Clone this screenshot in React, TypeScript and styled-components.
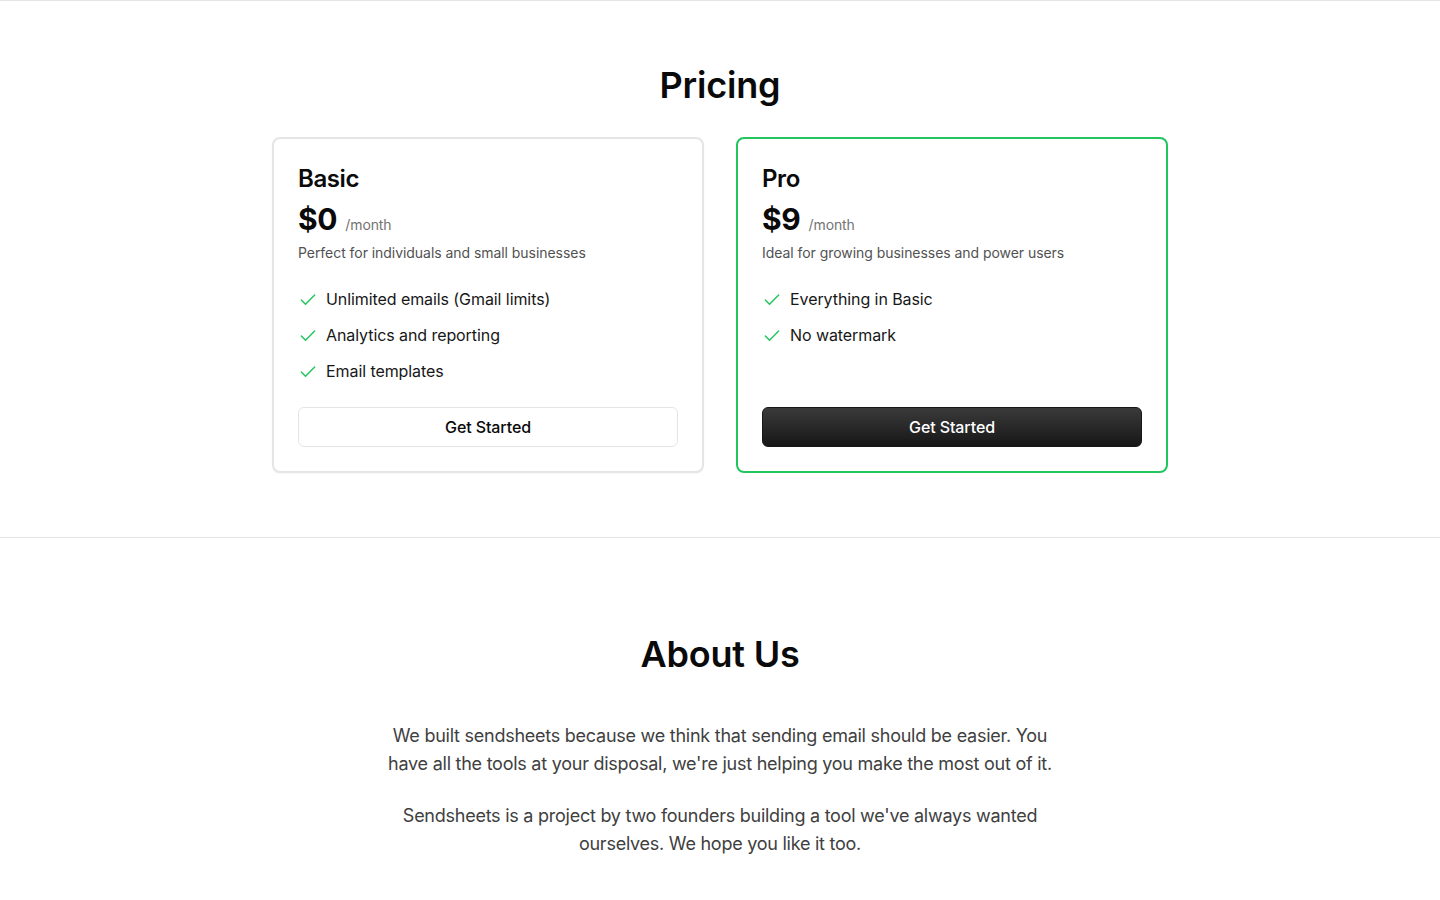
import React from "react";
import styled, { createGlobalStyle } from "styled-components";
import { Check } from "lucide-react";

const Global = createGlobalStyle`
  * { box-sizing: border-box; }
  html, body { margin: 0; padding: 0; background: #ffffff; }
  body {
    font-family: Inter, "Noto Sans", "Liberation Sans", sans-serif;
    color: #0a0a0a;
    -webkit-font-smoothing: antialiased;
  }
  h1, h2, h3, p, ul { margin: 0; padding: 0; }
`;

const Page = styled.main`
  display: flex;
  flex-direction: column;
`;

const PricingSection = styled.section`
  border-top: 1px solid #e5e5e5;
  border-bottom: 1px solid #e5e5e5;
  padding: 64px 16px 64px;
  display: flex;
  flex-direction: column;
  align-items: center;
`;

const SectionTitle = styled.h2`
  font-size: 36px;
  line-height: 40px;
  font-weight: 600;
  letter-spacing: -0.2px;
  text-align: center;
  color: #0a0a0a;
`;

const CardGrid = styled.div`
  margin-top: 32px;
  width: 100%;
  max-width: 896px;
  display: grid;
  grid-template-columns: 1fr 1fr;
  gap: 32px;
`;

const Card = styled.div<{ $highlight?: boolean }>`
  display: flex;
  flex-direction: column;
  padding: 24px;
  border-radius: 8px;
  border: 2px solid ${(p) => (p.$highlight ? "#22c55e" : "#e5e5e5")};
  background: #ffffff;
  box-shadow: ${(p) => (p.$highlight ? "none" : "0 1px 2px rgba(0,0,0,0.04)")};
`;

const PlanName = styled.h3`
  font-size: 24px;
  line-height: 32px;
  font-weight: 600;
  letter-spacing: -0.4px;
`;

const PriceRow = styled.div`
  margin-top: 6px;
  display: flex;
  align-items: baseline;
  gap: 8px;
`;

const Price = styled.span`
  font-size: 30px;
  line-height: 36px;
  font-weight: 700;
  letter-spacing: -0.3px;
`;

const Period = styled.span`
  font-size: 14px;
  line-height: 20px;
  color: #737373;
  letter-spacing: -0.1px;
`;

const Description = styled.p`
  margin-top: 6px;
  font-size: 14px;
  line-height: 20px;
  color: #525252;
  letter-spacing: -0.05px;
`;

const FeatureList = styled.ul`
  list-style: none;
  margin-top: 24px;
  display: flex;
  flex-direction: column;
  gap: 12px;
`;

const Feature = styled.li`
  display: flex;
  align-items: center;
  gap: 8px;
  font-size: 16px;
  line-height: 24px;
  color: #171717;
  letter-spacing: -0.08px;

  svg {
    flex-shrink: 0;
    color: #22c55e;
    margin-top: 2px;
  }
`;

const Button = styled.button<{ $primary?: boolean }>`
  height: 40px;
  width: 100%;
  border-radius: 6px;
  font-family: inherit;
  font-size: 16px;
  font-weight: 500;
  letter-spacing: -0.1px;
  cursor: pointer;
  border: 1px solid ${(p) => (p.$primary ? "#171717" : "#e5e5e5")};
  background: ${(p) =>
    p.$primary ? "linear-gradient(180deg, #3a3a3a 0%, #171717 100%)" : "#ffffff"};
  color: ${(p) => (p.$primary ? "#ffffff" : "#0a0a0a")};
`;

const ButtonSpacer = styled.div`
  flex: 1;
  min-height: 24px;
`;

const AboutSection = styled.section`
  padding: 96px 16px 64px;
  display: flex;
  flex-direction: column;
  align-items: center;
`;

const AboutBody = styled.div`
  margin-top: 48px;
  max-width: 672px;
  display: flex;
  flex-direction: column;
  gap: 24px;
`;

const AboutText = styled.p`
  font-size: 18px;
  line-height: 28px;
  color: #404040;
  text-align: center;
  letter-spacing: -0.25px;
`;

type Plan = {
  name: string;
  price: string;
  description: string;
  features: string[];
  highlight?: boolean;
};

const plans: Plan[] = [
  {
    name: "Basic",
    price: "$0",
    description: "Perfect for individuals and small businesses",
    features: ["Unlimited emails (Gmail limits)", "Analytics and reporting", "Email templates"],
  },
  {
    name: "Pro",
    price: "$9",
    description: "Ideal for growing businesses and power users",
    features: ["Everything in Basic", "No watermark"],
    highlight: true,
  },
];

export default function App() {
  return (
    <Page>
      <Global />
      <PricingSection>
        <SectionTitle>Pricing</SectionTitle>
        <CardGrid>
          {plans.map((plan) => (
            <Card key={plan.name} $highlight={plan.highlight}>
              <PlanName>{plan.name}</PlanName>
              <PriceRow>
                <Price>{plan.price}</Price>
                <Period>/month</Period>
              </PriceRow>
              <Description>{plan.description}</Description>
              <FeatureList>
                {plan.features.map((f) => (
                  <Feature key={f}>
                    <Check size={20} strokeWidth={1.75} />
                    {f}
                  </Feature>
                ))}
              </FeatureList>
              <ButtonSpacer />
              <Button $primary={plan.highlight}>Get Started</Button>
            </Card>
          ))}
        </CardGrid>
      </PricingSection>
      <AboutSection>
        <SectionTitle>About Us</SectionTitle>
        <AboutBody>
          <AboutText>
            We built sendsheets because we think that sending email should be easier. You have all
            the tools at your disposal, we're just helping you make the most out of it.
          </AboutText>
          <AboutText>
            Sendsheets is a project by two founders building a tool we've always wanted ourselves.
            We hope you like it too.
          </AboutText>
        </AboutBody>
      </AboutSection>
    </Page>
  );
}
